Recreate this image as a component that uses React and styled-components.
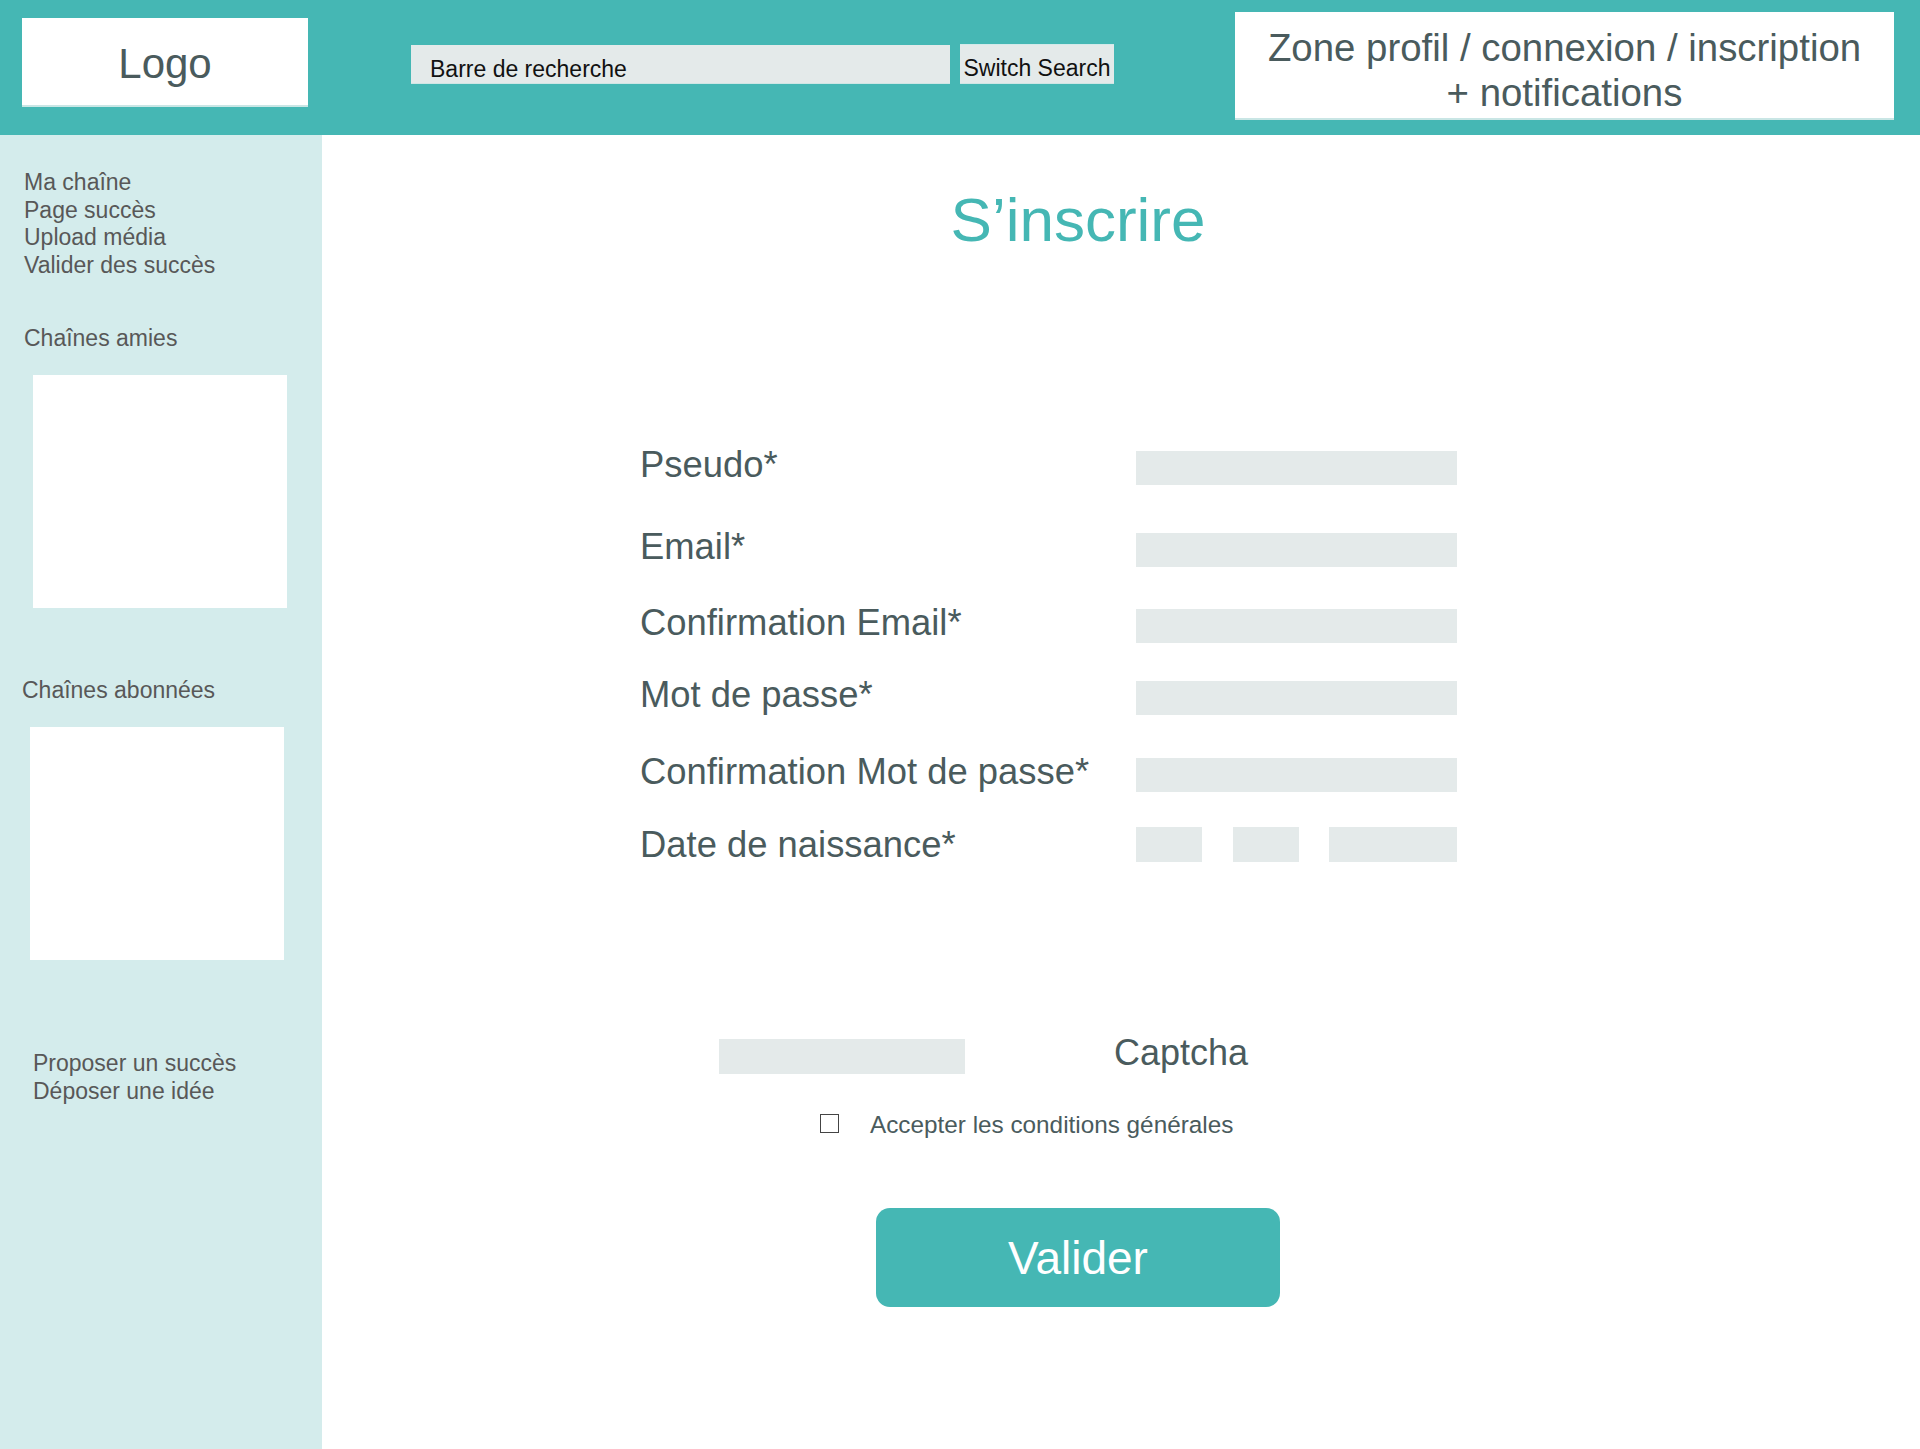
import styled, { createGlobalStyle } from "styled-components";

const GlobalStyle = createGlobalStyle`
  html, body {
    margin: 0;
    padding: 0;
    background: #ffffff;
    font-family: "Liberation Sans", Arial, sans-serif;
  }
  * {
    box-sizing: border-box;
  }
`;

const TEAL = "#45b7b4";
const FIELD = "#e4eaea";
const INK = "#4a5b5d";

const Page = styled.div`
  display: flex;
  flex-direction: column;
  min-height: 1449px;
`;

const Header = styled.header`
  display: flex;
  align-items: flex-start;
  height: 135px;
  padding: 0 26px 0 22px;
  background: ${TEAL};
`;

const LogoBox = styled.div`
  display: flex;
  align-items: center;
  justify-content: center;
  width: 286px;
  height: 89px;
  margin-top: 18px;
  padding-top: 5px;
  background: #fff;
  border-bottom: 2px solid #c9e6e5;
  color: ${INK};
  font-size: 42px;
`;

const SearchGroup = styled.div`
  display: flex;
  align-items: flex-end;
  gap: 10px;
  margin: 44px 0 0 103px;
`;

const SearchInput = styled.div`
  display: flex;
  align-items: flex-end;
  width: 539px;
  height: 39px;
  padding: 0 0 1px 19px;
  background: ${FIELD};
  border-bottom: 1px solid #cfe6e5;
  color: #111;
  font-size: 23px;
  line-height: 25px;
`;

const SwitchButton = styled.div`
  display: flex;
  align-items: flex-end;
  justify-content: center;
  width: 154px;
  height: 40px;
  padding-bottom: 2px;
  background: ${FIELD};
  border-top: 1px solid #d3eaea;
  border-bottom: 1px solid #cfe6e5;
  color: #111;
  font-size: 23px;
  line-height: 25px;
`;

const ProfileZone = styled.div`
  display: flex;
  align-items: center;
  justify-content: center;
  width: 659px;
  height: 108px;
  margin: 12px 0 0 auto;
  padding-top: 10px;
  background: #fff;
  border-bottom: 2px solid #c9e6e5;
  color: ${INK};
  font-size: 38.4px;
  line-height: 45px;
  text-align: center;
`;

const Body = styled.div`
  display: flex;
  flex: 1;
`;

const Sidebar = styled.aside`
  display: flex;
  flex-direction: column;
  width: 322px;
  flex-shrink: 0;
  padding-top: 34px;
  background: #d4ecec;
  color: #585858;
  font-size: 23px;
  line-height: 27.7px;
`;

const SideText = styled.div`
  margin: ${(p) => p.$top || 0}px 0 0 ${(p) => p.$indent}px;
`;

const SideBox = styled.div`
  width: 254px;
  height: 233px;
  margin: ${(p) => p.$top}px 0 0 ${(p) => p.$indent}px;
  background: #fff;
`;

const Main = styled.main`
  display: flex;
  flex-direction: column;
  flex: 1;
  padding: 49px 86px 0 0;
`;

const Title = styled.h1`
  margin: 0;
  color: ${TEAL};
  font-size: 62px;
  font-weight: normal;
  line-height: 71px;
  text-align: center;
`;

const Form = styled.div`
  display: flex;
  flex-direction: column;
  width: 817px;
  margin: 192px 0 0 318px;
`;

const Row = styled.div`
  display: flex;
  align-items: flex-end;
  height: 38px;
  margin-top: ${(p) => p.$top}px;
`;

const Label = styled.div`
  width: 497px;
  padding-bottom: ${(p) => p.$lift ?? 3}px;
  color: ${INK};
  font-size: 36.4px;
  line-height: 34px;
  white-space: nowrap;
`;

const Field = styled.div`
  width: ${(p) => p.$w}px;
  height: ${(p) => p.$h || 34}px;
  background: ${FIELD};
`;

const DateFields = styled.div`
  display: flex;
  justify-content: space-between;
  width: 321px;
`;

const CaptchaRow = styled.div`
  display: flex;
  align-items: flex-end;
  gap: 149px;
  height: 38px;
  margin: 174px 0 0 397px;
`;

const CaptchaLabel = styled.div`
  padding-bottom: 4px;
  color: ${INK};
  font-size: 36px;
  line-height: 34px;
`;

const CheckRow = styled.label`
  display: flex;
  align-items: flex-end;
  gap: 31px;
  margin: 39px 0 0 498px;
  color: ${INK};
  font-size: 24.3px;
  line-height: 24px;
`;

const CheckBox = styled.span`
  display: block;
  width: 19px;
  height: 19px;
  margin-bottom: 4px;
  border: 1.5px solid #444;
  background: #fff;
`;

const SubmitButton = styled.button`
  align-self: center;
  width: 404px;
  height: 99px;
  margin-top: 71px;
  border: none;
  border-radius: 14px;
  background: ${TEAL};
  color: #fff;
  font-family: "Liberation Sans", Arial, sans-serif;
  font-size: 46px;
  cursor: pointer;
`;

const fields = [
  { label: "Pseudo*", top: 0 },
  { label: "Email*", top: 44 },
  { label: "Confirmation Email*", top: 38 },
  { label: "Mot de passe*", top: 34 },
  { label: "Confirmation Mot de passe*", top: 39 },
];

const App = () => {
  return (
    <>
      <GlobalStyle />
      <Page>
        <Header>
          <LogoBox>Logo</LogoBox>
          <SearchGroup>
            <SearchInput>Barre de recherche</SearchInput>
            <SwitchButton>Switch Search</SwitchButton>
          </SearchGroup>
          <ProfileZone>
            Zone profil / connexion / inscription
            <br />+ notifications
          </ProfileZone>
        </Header>
        <Body>
          <Sidebar>
            <SideText $indent={24}>
              Ma chaîne
              <br />
              Page succès
              <br />
              Upload média
              <br />
              Valider des succès
            </SideText>
            <SideText $indent={24} $top={45}>
              Chaînes amies
            </SideText>
            <SideBox $indent={33} $top={22} />
            <SideText $indent={22} $top={69}>
              Chaînes abonnées
            </SideText>
            <SideBox $indent={30} $top={23} />
            <SideText $indent={33} $top={90}>
              Proposer un succès
              <br />
              Déposer une idée
            </SideText>
          </Sidebar>
          <Main>
            <Title>S’inscrire</Title>
            <Form>
              {fields.map((f) => (
                <Row key={f.label} $top={f.top}>
                  <Label>{f.label}</Label>
                  <Field $w={321} />
                </Row>
              ))}
              <Row $top={32}>
                <Label $lift={0}>Date de naissance*</Label>
                <DateFields>
                  <Field $w={66} $h={35} />
                  <Field $w={66} $h={35} />
                  <Field $w={128} $h={35} />
                </DateFields>
              </Row>
            </Form>
            <CaptchaRow>
              <Field $w={246} $h={35} />
              <CaptchaLabel>Captcha</CaptchaLabel>
            </CaptchaRow>
            <CheckRow>
              <CheckBox />
              Accepter les conditions générales
            </CheckRow>
            <SubmitButton>Valider</SubmitButton>
          </Main>
        </Body>
      </Page>
    </>
  );
};

export default App;
